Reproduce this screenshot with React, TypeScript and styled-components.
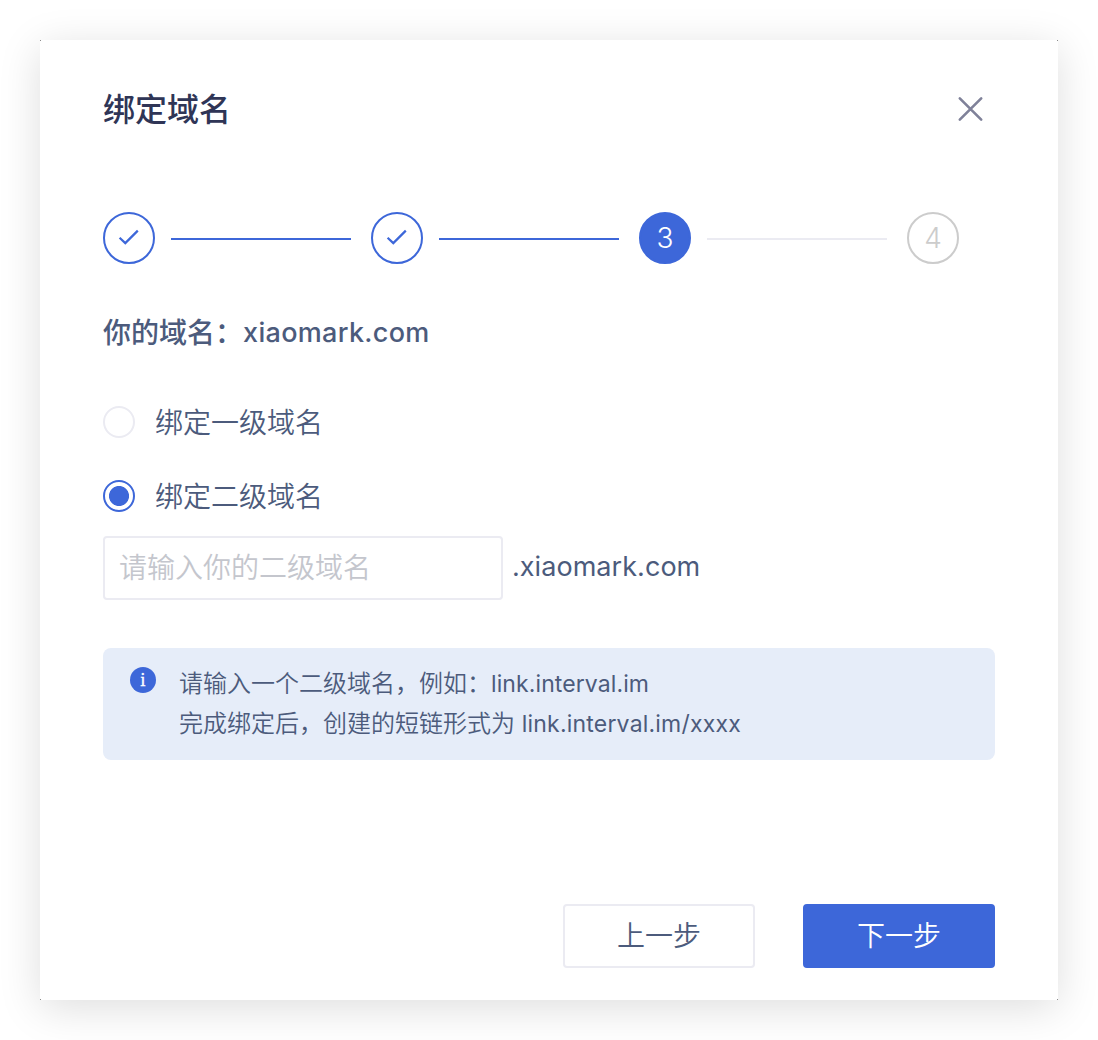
import React, { useState } from "react";
import styled, { createGlobalStyle, css } from "styled-components";

const color = {
  primary: "#3d67d9",
  title: "#2f3556",
  text: "#4c5b7c",
  border: "#ebebf2",
  muted: "#cccccc",
};

const GlobalStyle = createGlobalStyle`
  *, *::before, *::after { box-sizing: border-box; }
  body {
    margin: 0;
    background: #fff;
    font-family: Inter, "Noto Sans CJK SC", sans-serif;
    color: ${color.text};
    -webkit-font-smoothing: antialiased;
  }
`;

const Page = styled.main`
  min-height: 1040px;
  padding: 40px;
`;

const corner = "linear-gradient(#8c8c8c, #8c8c8c)";

const Dialog = styled.section`
  display: flex;
  flex-direction: column;
  width: 1018px;
  height: 960px;
  padding: 45px 63px 32px;
  background-color: #fff;
  background-image: ${corner}, ${corner}, ${corner}, ${corner};
  background-position: left top, right top, left bottom, right bottom;
  background-size: 1px 1px;
  background-repeat: no-repeat;
  box-shadow: 0 8px 40px rgba(0, 0, 0, 0.135);
`;

const Header = styled.header`
  display: flex;
  align-items: center;
  justify-content: space-between;
  height: 50px;
  padding-right: 11px;
`;

const Title = styled.h1`
  margin: 0;
  font-size: 32px;
  line-height: 50px;
  font-weight: 500;
  color: ${color.title};
`;

const CloseButton = styled.button`
  display: flex;
  margin-bottom: 2px;
  padding: 0;
  border: 0;
  background: none;
`;

const Steps = styled.ol`
  display: flex;
  align-items: center;
  margin: 77px 0 0;
  padding: 0;
  list-style: none;
`;

type StepState = "done" | "current" | "pending";

const StepCircle = styled.li<{ $state: StepState }>`
  display: flex;
  align-items: center;
  justify-content: center;
  width: 52px;
  height: 52px;
  border: 2px solid ${(p) => (p.$state === "pending" ? color.muted : color.primary)};
  border-radius: 50%;
  background: ${(p) => (p.$state === "current" ? color.primary : "#fff")};
  color: ${(p) => (p.$state === "current" ? "#fff" : color.muted)};
  font-size: 28px;
  line-height: 48px;
  font-weight: 350;
`;

const StepLine = styled.li<{ $active: boolean }>`
  width: 180px;
  height: 2px;
  margin: 2px 20px 0 16px;
  background: ${(p) => (p.$active ? color.primary : color.border)};
`;

const DomainLine = styled.p`
  display: flex;
  margin: 49px 0 0;
  font-size: 28px;
  line-height: 40px;
  font-weight: 500;
`;

const DomainName = styled.span`
  font-size: 27px;
  line-height: 39px;
  letter-spacing: 0.32px;
`;

const Options = styled.div`
  display: grid;
  gap: 34px;
  margin-top: 49px;
`;

const Option = styled.label`
  display: flex;
  align-items: center;
  gap: 20px;
  height: 40px;
  font-size: 28px;
  font-weight: 350;
`;

const OptionLabel = styled.span`
  padding-top: 2px;
  line-height: 40px;
`;

const Radio = styled.input`
  appearance: none;
  width: 32px;
  height: 32px;
  margin: 0;
  border: 2px solid ${color.border};
  border-radius: 50%;
  background: #fff;

  &:checked {
    border-color: ${color.primary};
    background: radial-gradient(circle, ${color.primary} 9.6px, #fff 10.4px);
  }
`;

const FieldRow = styled.div`
  display: flex;
  align-items: center;
  gap: 9px;
  height: 64px;
  margin-top: 20px;
`;

const Field = styled.input`
  width: 400px;
  height: 64px;
  padding: 0 14px;
  border: 2px solid ${color.border};
  border-radius: 4px;
  outline: none;
  background: #fff;
  color: ${color.text};
  font: 350 28px/40px Inter, "Noto Sans CJK SC", sans-serif;

  &::placeholder {
    color: #c4c6cd;
    opacity: 1;
  }
`;

const Suffix = styled.span`
  padding-bottom: 2px;
  font-size: 27px;
  line-height: 40px;
  font-weight: 400;
  letter-spacing: 0.05px;
`;

const Notice = styled.aside`
  display: flex;
  gap: 23px;
  height: 112px;
  margin-top: 48px;
  padding: 16px 27px;
  border-radius: 8px;
  background: #e6edf9;
`;

const InfoBadge = styled.span`
  width: 26px;
  height: 26px;
  margin-top: 3px;
  border-radius: 50%;
  background: ${color.primary};
  color: #fff;
  font: 19px/26px "Liberation Serif", serif;
  -webkit-text-stroke: 0.3px #fff;
  text-align: center;
`;

const NoticeText = styled.p`
  margin: 0;
  font-size: 24px;
  line-height: 40px;
  font-weight: 350;
`;

const NoticeLine = styled.span`
  display: block;
  white-space: nowrap;
`;

const Latin = styled.span<{ $spacing: number }>`
  font-size: 23px;
  font-weight: 400;
  letter-spacing: ${(p) => p.$spacing}px;
`;

const Actions = styled.footer`
  display: flex;
  justify-content: flex-end;
  gap: 48px;
  margin-top: auto;
`;

const Button = styled.button<{ $primary?: boolean }>`
  width: 192px;
  height: 64px;
  padding: 0;
  border: 2px solid ${color.border};
  border-radius: 4px;
  background: #fff;
  color: ${color.text};
  font: 350 28px/40px Inter, "Noto Sans CJK SC", sans-serif;
  ${(p) =>
    p.$primary &&
    css`
      border-color: ${color.primary};
      background: ${color.primary};
      color: #fff;
    `}
`;

const CheckIcon = () => (
  <svg width="24" height="24" viewBox="0 0 24 24" fill="none" stroke={color.primary} strokeWidth="2.2">
    <path d="M2.6 11.7 L8.3 17.1 L20.8 4.6" />
  </svg>
);

const CloseIcon = () => (
  <svg width="27" height="26" viewBox="0 0 27 26" fill="none" stroke="#7f8199" strokeWidth="2.6" strokeLinecap="round">
    <path d="M2.8 2.3 L24.2 23.7 M24.2 2.3 L2.8 23.7" />
  </svg>
);

const steps: StepState[] = ["done", "done", "current", "pending"];

const levels = [
  { id: "first", label: "绑定一级域名" },
  { id: "second", label: "绑定二级域名" },
];

export default function App() {
  const [level, setLevel] = useState("second");

  return (
    <Page>
      <GlobalStyle />
      <Dialog>
        <Header>
          <Title>绑定域名</Title>
          <CloseButton aria-label="关闭">
            <CloseIcon />
          </CloseButton>
        </Header>

        <Steps>
          {steps.map((state, i) => (
            <React.Fragment key={i}>
              {i > 0 && <StepLine $active={state !== "pending"} />}
              <StepCircle $state={state}>{state === "done" ? <CheckIcon /> : i + 1}</StepCircle>
            </React.Fragment>
          ))}
        </Steps>

        <DomainLine>
          你的域名：<DomainName>xiaomark.com</DomainName>
        </DomainLine>

        <Options>
          {levels.map((item) => (
            <Option key={item.id}>
              <Radio type="radio" name="level" checked={level === item.id} onChange={() => setLevel(item.id)} />
              <OptionLabel>{item.label}</OptionLabel>
            </Option>
          ))}
        </Options>

        <FieldRow>
          <Field placeholder="请输入你的二级域名" />
          <Suffix>.xiaomark.com</Suffix>
        </FieldRow>

        <Notice>
          <InfoBadge>i</InfoBadge>
          <NoticeText>
            <NoticeLine>
              请输入一个二级域名，例如：<Latin $spacing={0.1}>link.interval.im</Latin>
            </NoticeLine>
            <NoticeLine>
              完成绑定后，创建的短链形式为 <Latin $spacing={0.2}>link.interval.im/xxxx</Latin>
            </NoticeLine>
          </NoticeText>
        </Notice>

        <Actions>
          <Button>上一步</Button>
          <Button $primary>下一步</Button>
        </Actions>
      </Dialog>
    </Page>
  );
}
